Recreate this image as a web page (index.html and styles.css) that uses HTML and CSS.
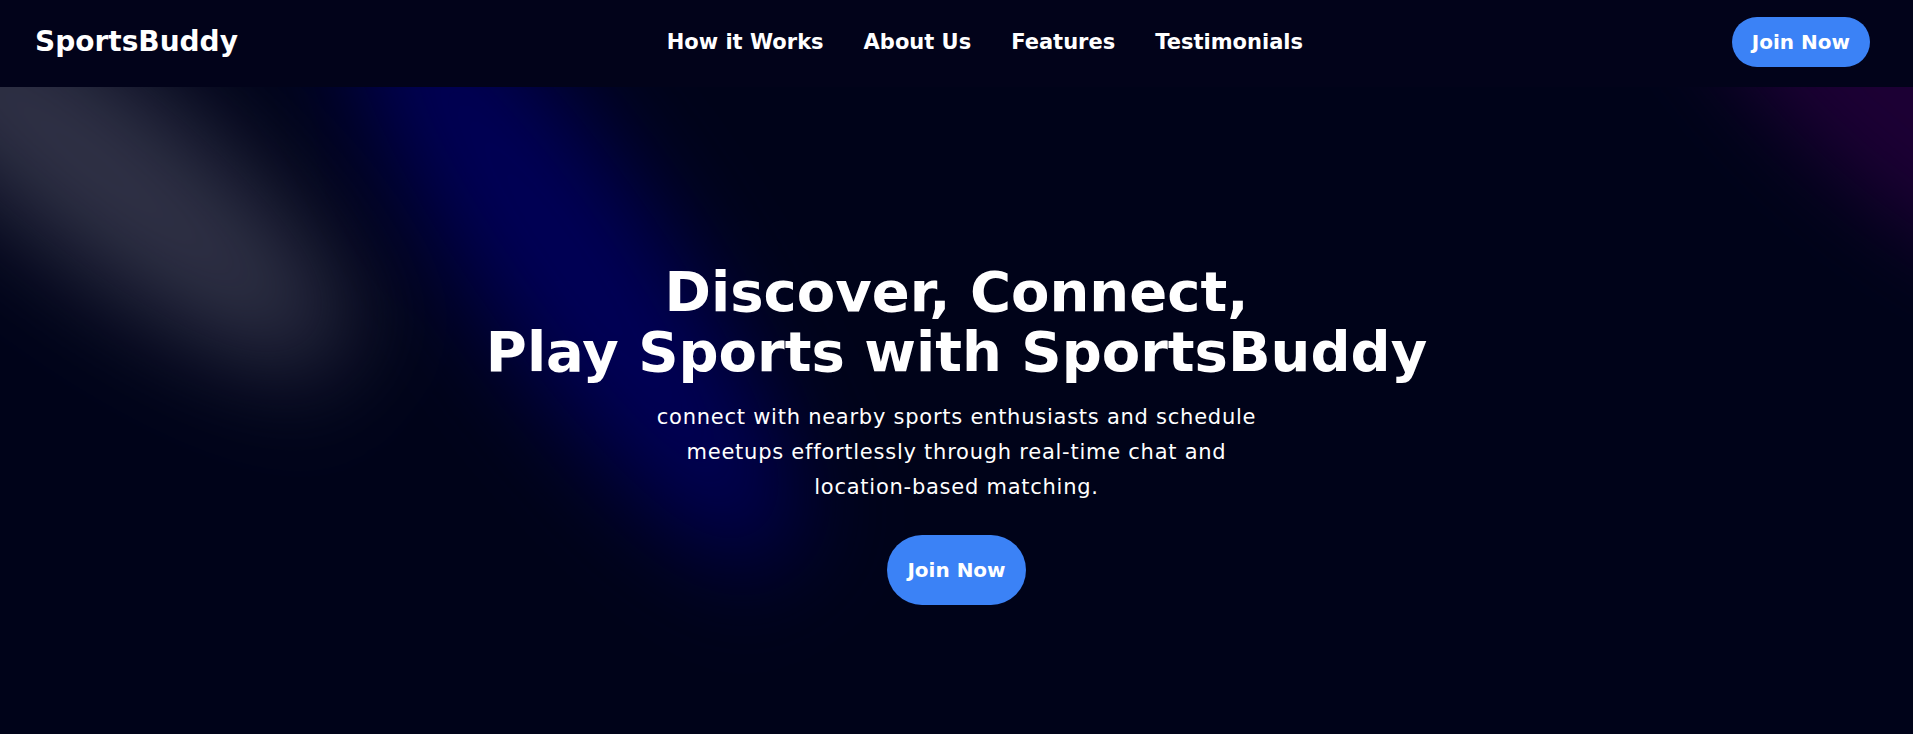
FILE: index.html
```html
<!DOCTYPE html>
<html lang="en">
<head>
<meta charset="utf-8">
<title>SportsBuddy</title>
<link rel="stylesheet" href="styles.css">
</head>
<body>
<header class="topbar">
  <a class="logo" href="#">SportsBuddy</a>
  <nav class="nav">
    <a href="#how">How it Works</a>
    <a href="#about">About Us</a>
    <a href="#features">Features</a>
    <a href="#testimonials">Testimonials</a>
  </nav>
  <a class="btn btn-small" href="#join">Join Now</a>
</header>
<main>
  <section class="hero">
    <div class="glow glow-gray"></div>
    <div class="glow glow-blue"></div>
    <div class="glow glow-purple"></div>
    <div class="hero-content">
      <h1 class="hero-title">Discover, Connect,<br>Play Sports with SportsBuddy</h1>
      <p class="hero-text">connect with nearby sports enthusiasts and schedule meetups effortlessly through real-time chat and location-based matching.</p>
      <a class="btn btn-large" href="#join">Join Now</a>
    </div>
  </section>
  <section class="block" id="how"></section>
  <section class="block" id="about"></section>
  <section class="block" id="features"></section>
  <section class="block" id="testimonials"></section>
</main>
</body>
</html>
```

FILE: styles.css
```css
* { box-sizing: border-box; }

html, body {
  margin: 0;
  padding: 0;
}

::-webkit-scrollbar {
  width: 17px;
  background: #f1f1f1;
}

::-webkit-scrollbar-thumb {
  background: #c1c1c1;
  border: 2px solid #f1f1f1;
}

body {
  background: #000319;
  color: #ffffff;
  font-family: "DejaVu Sans", "Liberation Sans", sans-serif;
}

a { color: inherit; text-decoration: none; }

.topbar {
  height: 87px;
  display: flex;
  align-items: center;
  justify-content: space-between;
  padding: 0 43px 3px 35px;
  background: #02031a;
  position: relative;
  z-index: 2;
}

.logo {
  font-size: 28px;
  font-weight: 700;
  line-height: 1;
}

.nav {
  display: flex;
  gap: 40px;
  font-size: 21px;
  font-weight: 700;
}

.btn {
  display: inline-block;
  background: #3b82f6;
  color: #ffffff;
  font-weight: 700;
  font-size: 20px;
  line-height: 30px;
  border-radius: 9999px;
}

.btn-small { padding: 10px 20px; }
.btn-large { padding: 20px 20px; }

.hero {
  position: relative;
  overflow: hidden;
  min-height: 647px;
  padding-top: 175px;
}

.glow {
  position: absolute;
  border-radius: 50%;
  pointer-events: none;
}

.glow-gray {
  left: -230px;
  top: -17px;
  width: 640px;
  height: 180px;
  background: #303246;
  transform: rotate(38deg);
  filter: blur(50px);
}

.glow-blue {
  left: 190px;
  top: 73px;
  width: 750px;
  height: 190px;
  background: #000056;
  transform: rotate(55deg);
  filter: blur(50px);
}

.glow-purple {
  left: 1590px;
  top: -177px;
  width: 700px;
  height: 300px;
  background: #1c0034;
  transform: rotate(40deg);
  filter: blur(40px);
}

.hero-content {
  position: relative;
  z-index: 1;
  display: flex;
  flex-direction: column;
  align-items: center;
  text-align: center;
}

.hero-title {
  margin: 0;
  font-size: 56px;
  line-height: 60px;
  font-weight: 700;
}

.hero-text {
  margin: 18px 0 0;
  max-width: 620px;
  font-size: 21px;
  line-height: 35px;
  letter-spacing: 0.75px;
  font-weight: 400;
}

.hero-content .btn-large { margin-top: 30px; }

.block {
  min-height: 645px;
  background: #000319;
}
```
